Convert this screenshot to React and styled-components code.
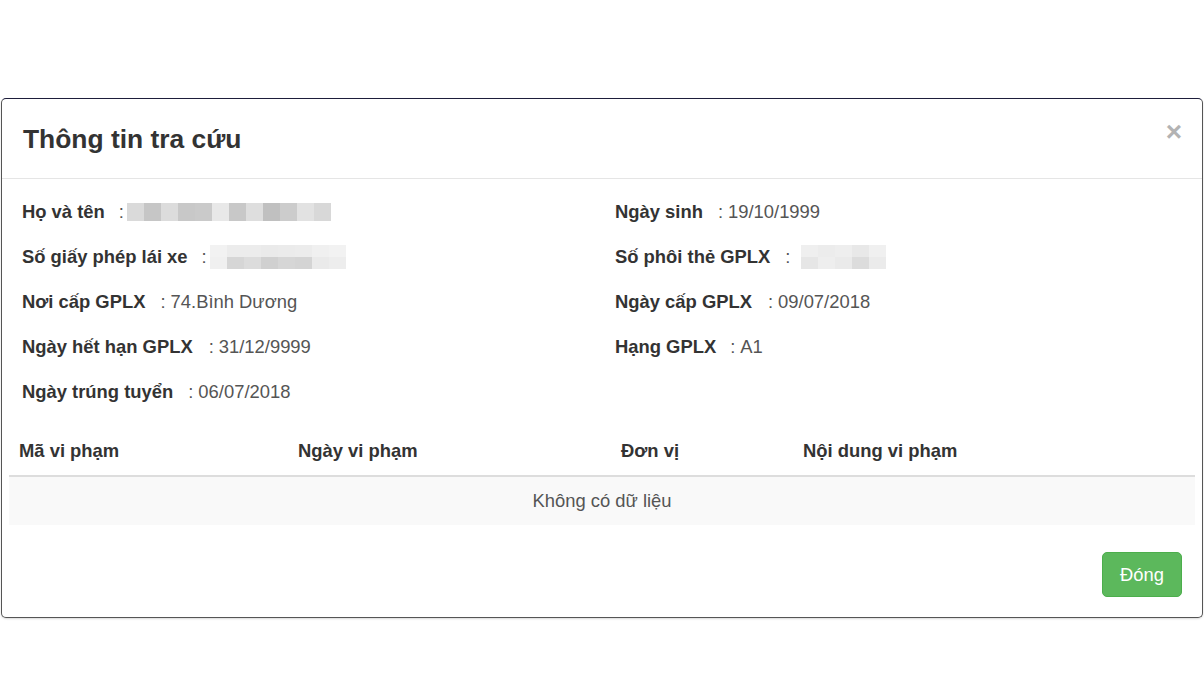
import styled, { createGlobalStyle } from 'styled-components';

const GlobalStyle = createGlobalStyle`
  html, body {
    margin: 0;
    padding: 0;
    background: #fff;
  }
  body {
    font-family: "Liberation Sans", Arial, sans-serif;
    color: #333;
  }
`;

const leftRows = [
  { label: 'Họ và tên', gap: 14, mask: { offset: -2, rows: [['#dadada', '#c6c6c6', '#dcdcdc', '#c8c8c8', '#cacaca', '#e8e8e8', '#c8c8c8', '#dedede', '#c0c0c0', '#cccccc', '#e2e2e2', '#d8d8d8']] } },
  {
    label: 'Số giấy phép lái xe',
    gap: 14,
    mask: {
      offset: -2,
      rows: [
        ['#f2f2f2', '#ececec', '#ececec', '#eaeaea', '#ebebeb', '#ececec', '#f0f0f0', '#f2f2f2'],
        ['#f0f0f0', '#d6d6d6', '#dcdcdc', '#d0d0d0', '#d6d6d6', '#d4d4d4', '#eaeaea', '#ededed'],
      ],
    },
  },
  { label: 'Nơi cấp GPLX', gap: 15, value: '74.Bình Dương' },
  { label: 'Ngày hết hạn GPLX', gap: 16, value: '31/12/9999' },
  { label: 'Ngày trúng tuyển', gap: 15, value: '06/07/2018' },
];

const rightRows = [
  { label: 'Ngày sinh', gap: 15, value: '19/10/1999' },
  {
    label: 'Số phôi thẻ GPLX',
    gap: 15,
    mask: {
      offset: 6,
      rows: [
        ['#efefef', '#ececec', '#eeeeee', '#e8e8e8', '#f0f0f0'],
        ['#e6e6e6', '#eeeeee', '#eaeaea', '#dcdcdc', '#ebebeb'],
      ],
    },
  },
  { label: 'Ngày cấp GPLX', gap: 16, value: '09/07/2018' },
  { label: 'Hạng GPLX', gap: 14, value: 'A1' },
];

const columns = [
  { title: 'Mã vi phạm', width: 279 },
  { title: 'Ngày vi phạm', width: 323 },
  { title: 'Đơn vị', width: 182 },
  { title: 'Nội dung vi phạm', width: 402 },
];

function Masked({ mask }) {
  return (
    <MaskBox $offset={mask.offset}>
      {mask.rows.map((row, i) => (
        <MaskRow key={i} $tall={mask.rows.length === 1}>
          {row.map((shade, j) => (
            <MaskCell key={j} $shade={shade} />
          ))}
        </MaskRow>
      ))}
    </MaskBox>
  );
}

function InfoRow({ row }) {
  return (
    <Row>
      <Label $gap={row.gap}>{row.label}</Label>
      <Colon>:</Colon>
      {row.mask ? <Masked mask={row.mask} /> : <Value>{row.value}</Value>}
    </Row>
  );
}

export default function App() {
  return (
    <>
      <GlobalStyle />
      <Page>
        <Modal>
          <Header>
            <Title>Thông tin tra cứu</Title>
            <Close type="button">×</Close>
          </Header>
          <Body>
            <InfoGrid>
              <Column>
                {leftRows.map((r) => (
                  <InfoRow key={r.label} row={r} />
                ))}
              </Column>
              <Column>
                {rightRows.map((r) => (
                  <InfoRow key={r.label} row={r} />
                ))}
              </Column>
            </InfoGrid>
            <Table>
              <colgroup>
                {columns.map((c) => (
                  <col key={c.title} style={{ width: c.width }} />
                ))}
              </colgroup>
              <thead>
                <tr>
                  {columns.map((c) => (
                    <Th key={c.title}>{c.title}</Th>
                  ))}
                </tr>
              </thead>
              <tbody>
                <tr>
                  <EmptyCell colSpan={4}>Không có dữ liệu</EmptyCell>
                </tr>
              </tbody>
            </Table>
          </Body>
          <Footer>
            <CloseBtn type="button">Đóng</CloseBtn>
          </Footer>
        </Modal>
      </Page>
    </>
  );
}

const Page = styled.div`
  width: 1204px;
  height: 677px;
  padding-top: 98px;
  padding-left: 1px;
  box-sizing: border-box;
  overflow: hidden;
`;

const Modal = styled.div`
  width: 1202px;
  box-sizing: border-box;
  background: #fff;
  border: 1px solid #555;
  border-top-color: #1d1d3b;
  border-radius: 5px;
  box-shadow: 0 1px 2px rgba(0, 0, 0, 0.15);
`;

const Header = styled.div`
  display: flex;
  align-items: center;
  justify-content: space-between;
  height: 79px;
  padding: 0 20px 0 21px;
  border-bottom: 1px solid #e5e5e5;
`;

const Title = styled.h4`
  margin: 0;
  font-size: 26.4px;
  font-weight: bold;
  color: #333;
  padding-top: 1px;
`;

const Close = styled.button`
  border: none;
  background: none;
  padding: 0;
  margin-top: -14px;
  font-family: "Liberation Sans", Arial, sans-serif;
  font-size: 28px;
  font-weight: bold;
  line-height: 1;
  color: #b3b3b3;
  cursor: pointer;
`;

const Body = styled.div`
  padding: 10px 7px 8px;
`;

const InfoGrid = styled.div`
  display: grid;
  grid-template-columns: 593px 1fr;
  padding: 0 13px;
`;

const Column = styled.div`
  display: flex;
  flex-direction: column;
`;

const Row = styled.div`
  display: flex;
  align-items: center;
  height: 45px;
  font-size: 18.4px;
`;

const Label = styled.span`
  font-weight: bold;
  color: #333;
  margin-right: ${(p) => p.$gap}px;
`;

const Colon = styled.span`
  color: #555;
  margin-right: 5px;
`;

const Value = styled.span`
  color: #555;
`;

const MaskBox = styled.div`
  display: flex;
  flex-direction: column;
  margin-left: ${(p) => p.$offset}px;
`;

const MaskRow = styled.div`
  display: flex;
  height: ${(p) => (p.$tall ? 18 : 12)}px;
`;

const MaskCell = styled.span`
  width: 17px;
  background: ${(p) => p.$shade};
`;

const Table = styled.table`
  width: 100%;
  margin-top: 13px;
  border-collapse: collapse;
  table-layout: fixed;
  font-size: 18.4px;
`;

const Th = styled.th`
  text-align: left;
  font-weight: bold;
  color: #333;
  height: 48px;
  padding: 0 10px;
  border-bottom: 2px solid #dddddd;
`;

const EmptyCell = styled.td`
  height: 48px;
  text-align: center;
  color: #555;
  background: #f9f9f9;
  padding: 0;
`;

const Footer = styled.div`
  display: flex;
  justify-content: flex-end;
  padding: 19px 20px 20px;
`;

const CloseBtn = styled.button`
  width: 80px;
  height: 45px;
  border: 1px solid #4cae4c;
  border-radius: 5px;
  background: #5cb85c;
  color: #fff;
  font-family: "Liberation Sans", Arial, sans-serif;
  font-size: 18.4px;
  cursor: pointer;
`;
